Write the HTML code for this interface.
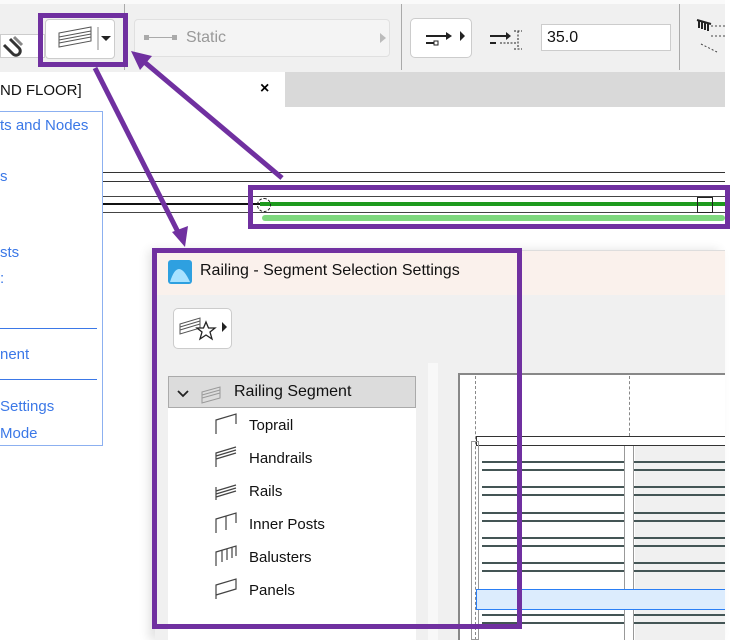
<!DOCTYPE html>
<html><head><meta charset="utf-8"><style>
*{margin:0;padding:0;box-sizing:border-box}
body{width:756px;height:640px;overflow:hidden;background:#fff;font-family:"Liberation Sans","DejaVu Sans",sans-serif;position:relative}
.a{position:absolute}
.blue{color:#3b78e7;font-size:15px}
.it{position:absolute;left:249px;font-size:15px;color:#111}
.ln{position:absolute;left:482px;width:243px;height:2px;background:#455}
</style></head><body>
<!-- toolbar -->
<div class="a" style="left:0;top:0;width:725px;height:72px;background:#f0f0f0;border-top:4px solid #fafafa"></div>
<div class="a" style="left:0;top:34px;width:45px;height:24px;background:#fff;border:1px solid #ccc"></div>
<svg class="a" style="left:2px;top:33px" width="26" height="26"><g fill="none" stroke="#333" stroke-width="3"><path d="M8 6 L17 15 A4 4 0 0 1 11 21 L2 12"/></g><path d="M12 4 L20 12" stroke="#888" stroke-width="3"/></svg>
<div class="a" style="left:124px;top:4px;width:1px;height:66px;background:#aaa"></div>
<div class="a" style="left:45px;top:19px;width:70px;height:40px;background:#fff;border:1px solid #ccc;border-radius:4px"></div>
<svg class="a" style="left:55px;top:25px" width="60" height="30"><path d="M4 8 L36 2 L36 16 L4 22Z M4 12 L36 6 M4 15 L36 9 M4 18 L36 12" fill="none" stroke="#555" stroke-width="1"/><path d="M43 2 V25" stroke="#888"/><path d="M46 11 L56 11 L51 16Z" fill="#222"/></svg>
<div class="a" style="left:134px;top:19px;width:256px;height:38px;background:#f4f4f4;border:1px solid #e0e0e0;border-radius:4px"></div>
<svg class="a" style="left:142px;top:33px" width="40" height="10"><rect x="2" y="2" width="5" height="5" fill="#aaa"/><rect x="30" y="2" width="5" height="5" fill="#aaa"/><path d="M7 4.5 H30" stroke="#aaa"/></svg>
<div class="a" style="left:186px;top:29px;font-size:16px;color:#999">Static</div>
<svg class="a" style="left:378px;top:32px" width="10" height="12"><path d="M2 1 L8 6 L2 11Z" fill="#bbb"/></svg>
<div class="a" style="left:401px;top:4px;width:1px;height:66px;background:#aaa"></div>
<div class="a" style="left:410px;top:18px;width:62px;height:40px;background:#fff;border:1px solid #ccc;border-radius:5px"></div>
<svg class="a" style="left:420px;top:28px" width="50" height="20"><path d="M6 8 H26 M6 15 H14" stroke="#222" stroke-width="2"/><path d="M26 4 L32 8 L26 12Z M40 3 L45 8 L40 13Z" fill="#222"/><rect x="14" y="13" width="4" height="4" fill="none" stroke="#222"/></svg>
<svg class="a" style="left:488px;top:28px" width="40" height="24"><path d="M2 8 H18 M2 15 H8" stroke="#222" stroke-width="2"/><path d="M18 4 L23 8 L18 12Z" fill="#222"/><path d="M12 15 H30 M30 3 V21 M26 3 H34 M26 21 H34" stroke="#222" stroke-dasharray="2 1.5"/></svg>
<div class="a" style="left:541px;top:24px;width:130px;height:27px;background:#fff;border:1px solid #ccc;font-size:16px;padding:4px 5px;color:#111">35.0</div>
<div class="a" style="left:679px;top:4px;width:1px;height:66px;background:#aaa"></div>
<svg class="a" style="left:695px;top:16px" width="30" height="40"><path d="M2 4 L16 8 M4 4 V12 M7 5 V13 M10 6 V14 M13 7 V15" stroke="#222" stroke-width="2"/><path d="M16 10 H30 M16 20 H30 M6 28 L22 36" stroke="#444" stroke-dasharray="2 2"/></svg>
<!-- tabs -->
<div class="a" style="left:285px;top:72px;width:440px;height:35px;background:#d9d9d9"></div>
<div class="a" style="left:0;top:82px;font-size:15px;color:#111">ND FLOOR]</div>
<div class="a" style="left:260px;top:80px;font-size:16px;font-weight:bold">×</div>
<!-- canvas lines -->
<div class="a" style="left:0;top:172px;width:725px;height:1px;background:#333"></div>
<div class="a" style="left:0;top:181px;width:725px;height:1px;background:#333"></div>
<div class="a" style="left:0;top:196px;width:725px;height:1px;background:#444"></div>
<div class="a" style="left:0;top:203px;width:725px;height:2px;background:#111"></div>
<div class="a" style="left:0;top:212px;width:725px;height:1px;background:#444"></div>
<div class="a" style="left:260px;top:202px;width:465px;height:4px;background:#1e9a1e"></div>
<div class="a" style="left:262px;top:215px;width:463px;height:6px;background:#7ed87e;border-radius:3px"></div>
<div class="a" style="left:257px;top:198px;width:14px;height:14px;border:1px dashed #222;border-radius:50%"></div>
<div class="a" style="left:697px;top:197px;width:16px;height:16px;border:1px solid #222"></div>
<!-- left panel -->
<div class="a" style="left:-2px;top:111px;width:105px;height:335px;background:#fff;border:1px solid #8cb0f0"></div>
<div class="a blue" style="left:0;top:117px">ts and Nodes</div>
<div class="a blue" style="left:0;top:168px">s</div>
<div class="a blue" style="left:0;top:244px">sts</div>
<div class="a blue" style="left:0;top:270px">:</div>
<div class="a" style="left:0;top:328px;width:97px;height:1px;background:#3b78e7"></div>
<div class="a blue" style="left:0;top:346px">nent</div>
<div class="a" style="left:0;top:379px;width:97px;height:1px;background:#3b78e7"></div>
<div class="a blue" style="left:0;top:398px">Settings</div>
<div class="a blue" style="left:0;top:425px">Mode</div>
<!-- dialog -->
<div class="a" style="left:155px;top:250px;width:570px;height:390px;background:#f0f0f0;box-shadow:-6px 0 10px rgba(0,0,0,.12)"></div>
<div class="a" style="left:155px;top:250px;width:570px;height:45px;background:#faf1ec;border-top:1px solid #ddd"></div>
<svg class="a" style="left:168px;top:260px" width="24" height="24"><rect x="0" y="0" width="24" height="24" rx="3" fill="#2ea0e0"/><path d="M2 22 Q10 -4 22 22" fill="#a8e2ff"/></svg>
<div class="a" style="left:200px;top:262px;font-size:16px;color:#111">Railing - Segment Selection Settings</div>
<div class="a" style="left:173px;top:308px;width:59px;height:41px;background:#fff;border:1px solid #ccc;border-radius:5px"></div>
<svg class="a" style="left:178px;top:314px" width="52" height="30"><path d="M2 10 L22 4 L22 14 L2 20Z M2 13 L22 7 M2 16 L22 10" fill="none" stroke="#555"/><path d="M28 8 L30.5 14 L37 14 L32 18 L34 25 L28 21 L22 25 L24 18 L19 14 L25.5 14Z" fill="#fff" stroke="#222" stroke-width="1.3"/><path d="M44 8 L49 13 L44 18Z" fill="#222"/></svg>
<div class="a" style="left:168px;top:376px;width:248px;height:264px;background:#fff"></div>
<div class="a" style="left:168px;top:376px;width:248px;height:32px;background:#dcdcdc;border:1px solid #aaa"></div>
<svg class="a" style="left:176px;top:386px" width="60" height="18"><path d="M2 5 L7 10 L12 5" fill="none" stroke="#222" stroke-width="1.8"/><path d="M26 6 L44 1 L44 12 L26 17Z M26 9 L44 4 M26 12 L44 7" fill="none" stroke="#999"/></svg>
<div class="a" style="left:234px;top:383px;font-size:16px;color:#111">Railing Segment</div>
<svg class="a" style="left:214px;top:412px" width="26" height="200">
<g fill="none" stroke="#444" stroke-width="1.2">
<path d="M2 22 V8 L22 2 V12"/>
<path d="M2 55 V41 L22 35 M2 44 L22 38 M2 47 L22 41"/>
<path d="M2 88 V75 M2 79 L22 73 M2 82 L22 76 M2 85 L22 79"/>
<path d="M2 121 V107 L22 101 V111 M12 104 V118"/>
<path d="M2 154 V140 L22 134 V144 M8 138 V150 M13 137 V148 M18 135 V146"/>
<path d="M2 187 V173 L22 167 V177 L2 183"/>
</g></svg>
<div class="it" style="top:417px">Toprail</div>
<div class="it" style="top:450px">Handrails</div>
<div class="it" style="top:483px">Rails</div>
<div class="it" style="top:516px">Inner Posts</div>
<div class="it" style="top:549px">Balusters</div>
<div class="it" style="top:582px">Panels</div>
<div class="a" style="left:428px;top:363px;width:10px;height:277px;background:#f8f8f8"></div>
<!-- preview -->
<div class="a" style="left:458px;top:373px;width:267px;height:267px;background:#fff;border:2px solid #888;border-right:none;border-bottom:none"></div>
<div class="a" style="left:475px;top:376px;width:0;height:264px;border-left:1px dashed #888"></div>
<div class="a" style="left:629px;top:376px;width:0;height:60px;border-left:1px dashed #888"></div>
<div class="a" style="left:476px;top:436px;width:249px;height:10px;border:1px solid #333;border-right:none"></div>
<div class="a" style="left:471px;top:441px;width:8px;height:199px;border:1px solid #999"></div>
<div class="a" style="left:635px;top:446px;width:90px;height:194px;background:#f0f0f0"></div>
<div class="ln" style="top:461px"></div><div class="ln" style="top:469px"></div>
<div class="ln" style="top:486px"></div><div class="ln" style="top:494px"></div>
<div class="ln" style="top:512px"></div><div class="ln" style="top:520px"></div>
<div class="ln" style="top:537px"></div><div class="ln" style="top:545px"></div>
<div class="ln" style="top:562px"></div><div class="ln" style="top:570px"></div>
<div class="ln" style="top:614px"></div><div class="ln" style="top:622px"></div>
<div class="a" style="left:624px;top:446px;width:10px;height:194px;background:#fff;border-left:1px solid #999;border-right:1px solid #999"></div>
<div class="a" style="left:476px;top:589px;width:249px;height:21px;background:#dcecfd;border:1px solid #2a7ff5;border-right:none"></div>
<!-- purple annotations -->
<div class="a" style="left:38px;top:13px;width:90px;height:54px;border:5px solid #7030a0"></div>
<div class="a" style="left:248px;top:185px;width:482px;height:44px;border:5px solid #7030a0"></div>
<div class="a" style="left:152px;top:248px;width:370px;height:381px;border:5px solid #7030a0"></div>
<svg class="a" style="left:0;top:0" width="756" height="640">
<g stroke="#7030a0" stroke-width="5" fill="#7030a0">
<path d="M282 178 L142 60"/>
<path d="M95 68 L180 236"/>
</g>
<path d="M131 51 L152 56 L140 70Z" fill="#7030a0"/>
<path d="M185 247 L172 232 L188 226Z" fill="#7030a0"/>
</svg>
</body></html>
